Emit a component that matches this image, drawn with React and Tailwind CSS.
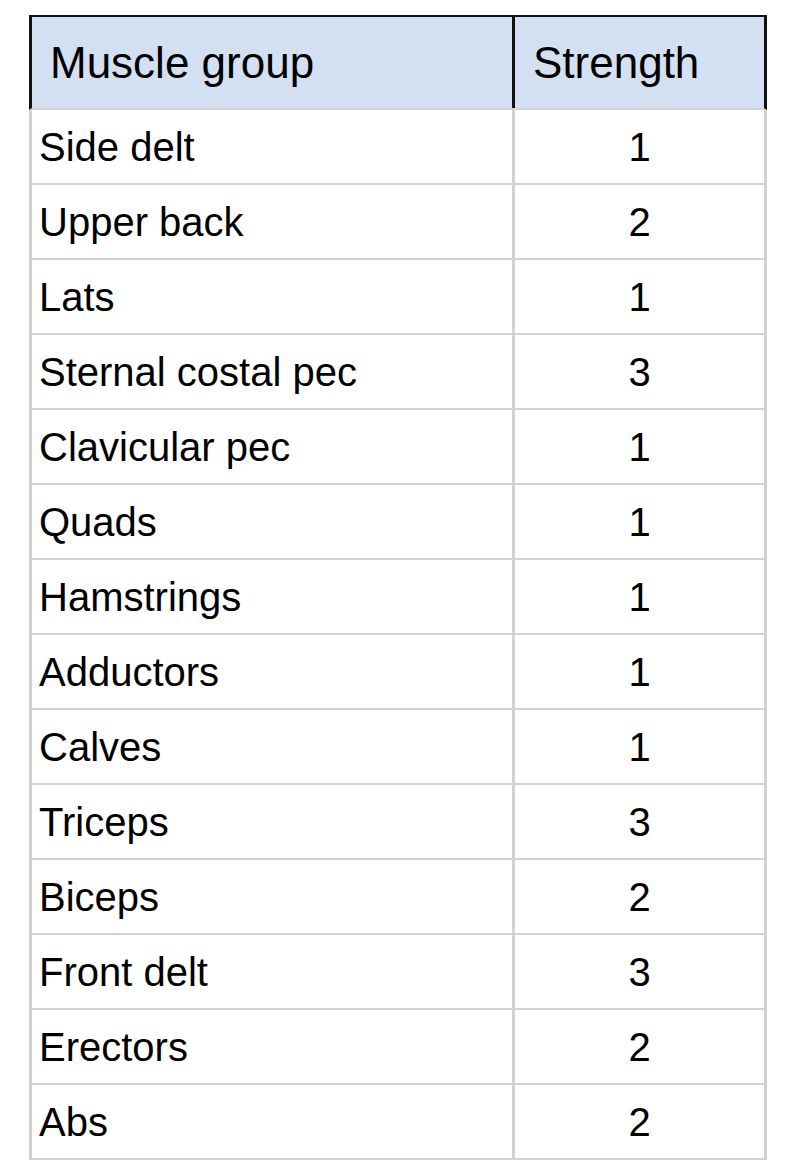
import React from "react";

const rows = [
	["Side delt", 1],
	["Upper back", 2],
	["Lats", 1],
	["Sternal costal pec", 3],
	["Clavicular pec", 1],
	["Quads", 1],
	["Hamstrings", 1],
	["Adductors", 1],
	["Calves", 1],
	["Triceps", 3],
	["Biceps", 2],
	["Front delt", 3],
	["Erectors", 2],
	["Abs", 2],
];

const App = () => {
	return (
		<div className="min-h-screen bg-white pl-[29px] pt-[15px] text-black" style={{ fontFamily: '"Liberation Sans", Arial, sans-serif' }}>
			<div className="w-[738px]">
				<div className="flex h-[95px] bg-[#d3e0f1] border-t-2 border-x-[3px] border-t-[#111] border-x-[#111] border-b-2 border-b-[#d2d2d2]">
					<div className="w-[483px] flex items-center pl-[18px] border-r-[3px] border-[#111] text-[44px] leading-none">
						Muscle group
					</div>
					<div className="flex-1 flex items-center pl-[18px] text-[44px] leading-none">Strength</div>
				</div>
				{rows.map(([name, value]) => (
					<div key={name} className="flex h-[75px] border-x-[3px] border-b-2 border-[#d2d2d2]">
						<div className="w-[483px] flex items-center pl-[7px] border-r-[3px] border-[#d2d2d2] text-[40px] leading-none">
							{name}
						</div>
						<div className="flex-1 flex items-center justify-center text-[40px] leading-none">{value}</div>
					</div>
				))}
			</div>
		</div>
	);
};

export default App;
